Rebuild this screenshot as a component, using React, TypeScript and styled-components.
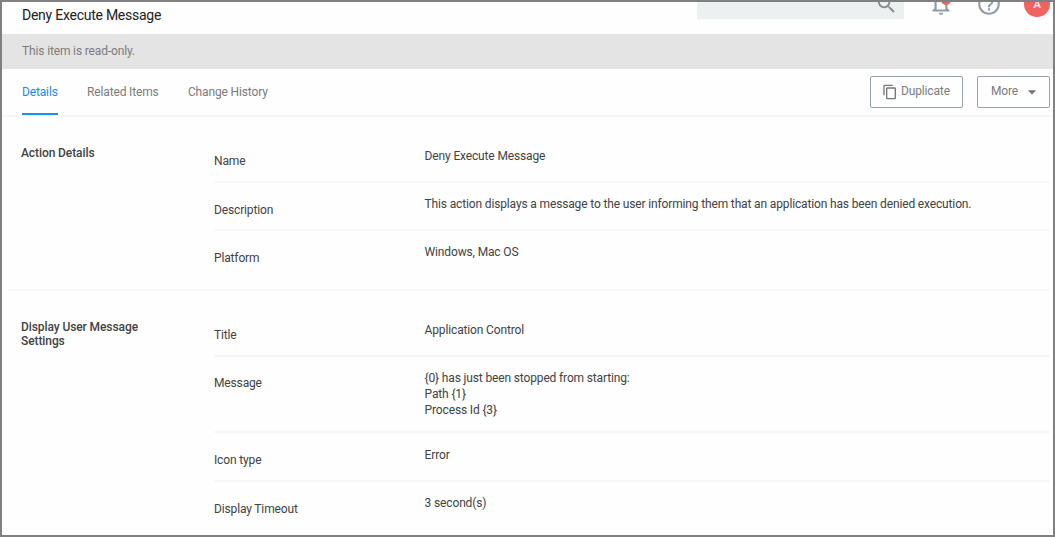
import React from "react";
import styled, { createGlobalStyle } from "styled-components";
import { MdSearch, MdNotificationsNone, MdHelpOutline, MdContentCopy, MdArrowDropDown } from "react-icons/md";

const GlobalStyle = createGlobalStyle`
  * { box-sizing: border-box; }
  body { margin: 0; background: #fff; font-family: Roboto, "Liberation Sans", sans-serif; font-size: 12px; letter-spacing: -0.145px; color: #424242; }
`;

const Frame = styled.div`
  width: 1055px;
  height: 537px;
  border: 2px solid #808080;
  background: #fefefe;
  overflow: hidden;
`;

const Header = styled.header`
  display: flex;
  justify-content: space-between;
  height: 32px;
  padding: 0 3px 0 20px;
  overflow: hidden;
`;

const Title = styled.h1`
  margin: 5px 0 0;
  font-size: 14px;
  line-height: 16px;
  font-weight: 400;
  letter-spacing: -0.25px;
  color: #212121;
`;

const Tools = styled.div`
  display: flex;
  align-items: flex-start;
  height: 28px;
  margin-top: -11px;
  color: #929ca8;
`;

const SearchBox = styled.div`
  display: flex;
  justify-content: flex-end;
  width: 207px;
  height: 28px;
  margin-right: 24px;
  padding: 2px 6px 0 0;
  background: #ecf0f1;
  color: #838c95;
`;

const BellButton = styled.div`
  position: relative;
  display: flex;
  margin-right: 21.5px;
`;

const Badge = styled.span`
  position: absolute;
  top: 4px;
  left: 13px;
  width: 10px;
  height: 10px;
  border-radius: 50%;
  background: #f25f5c;
`;

const HelpButton = styled.div`
  display: flex;
  margin-right: 22.5px;
`;

const Avatar = styled.div`
  width: 26px;
  height: 26px;
  border-radius: 50%;
  background: #f2625f;
  color: #fff;
  font-size: 11px;
  font-weight: 500;
  line-height: 27px;
  text-align: center;
`;

const Notice = styled.div`
  height: 35px;
  padding-left: 20px;
  line-height: 35px;
  background: #e4e4e4;
  color: #7b7b7b;
`;

const TabBar = styled.nav`
  display: flex;
  justify-content: space-between;
  height: 48px;
  padding: 0 3px 0 20px;
  border-bottom: 2px solid #f6f6f6;
`;

const Tabs = styled.div`
  display: flex;
  gap: 29.3px;
`;

const Tab = styled.div<{ $active?: boolean }>`
  height: 46px;
  line-height: 47px;
  color: ${(p) => (p.$active ? "#1e88f0" : "#7b7b7b")};
  border-bottom: 2px solid ${(p) => (p.$active ? "#1493f2" : "transparent")};
`;

const Actions = styled.div`
  display: flex;
  gap: 14px;
  padding-top: 7px;
`;

const Button = styled.button<{ $width: number }>`
  display: flex;
  align-items: center;
  width: ${(p) => p.$width}px;
  height: 32px;
  padding: 0 0 2px 13px;
  border: 1px solid #98a1ac;
  border-radius: 2px;
  background: #fefefe;
  font: inherit;
  letter-spacing: inherit;
  color: #7b7b7b;
`;

const CopyIcon = styled(MdContentCopy)`
  margin: 2px 3px 0 -2px;
  color: #757575;
`;

const CaretIcon = styled(MdArrowDropDown)`
  margin: 2px 0 0 4px;
  color: #757575;
`;

const Section = styled.section<{ $top: number }>`
  display: flex;
  margin: 0 3px 0 6px;
  padding: ${(p) => p.$top}px 0 0 13px;
  & + & { border-top: 2px solid #f7f7f7; }
`;

const SectionTitle = styled.h2`
  width: 193px;
  margin: 0;
  padding: 13px 50px 0 0;
  font-size: 12px;
  line-height: 14px;
  font-weight: 500;
  letter-spacing: -0.09px;
`;

const Fields = styled.div`
  flex: 1;
`;

const Field = styled.div<{ $height: number }>`
  display: flex;
  height: ${(p) => p.$height}px;
  border-bottom: 2px solid #f7f7f7;
  line-height: 16px;
  &:last-child { border-bottom: 0; }
`;

const Label = styled.div<{ $top: number }>`
  width: 210.6px;
  padding-top: ${(p) => p.$top}px;
`;

const Value = styled.div<{ $top: number }>`
  padding-top: ${(p) => p.$top}px;
  white-space: pre-line;
`;

type FieldData = { label: string; value: string; height: number; labelTop: number; valueTop: number };

const actionFields: FieldData[] = [
  { label: "Name", value: "Deny Execute Message", height: 50, labelTop: 20, valueTop: 15 },
  { label: "Description", value: "This action displays a message to the user informing them that an application has been denied execution.", height: 48, labelTop: 19, valueTop: 13 },
  { label: "Platform", value: "Windows, Mac OS", height: 58, labelTop: 19, valueTop: 13 },
];

const messageFields: FieldData[] = [
  { label: "Title", value: "Application Control", height: 50, labelTop: 20, valueTop: 15 },
  { label: "Message", value: "{0} has just been stopped from starting:\nPath {1}\nProcess Id {3}", height: 76, labelTop: 18, valueTop: 13 },
  { label: "Icon type", value: "Error", height: 49, labelTop: 19, valueTop: 14 },
  { label: "Display Timeout", value: "3 second(s)", height: 50, labelTop: 19, valueTop: 13 },
];

const FieldList = ({ items }: { items: FieldData[] }) => (
  <Fields>
    {items.map((f) => (
      <Field key={f.label} $height={f.height}>
        <Label $top={f.labelTop}>{f.label}</Label>
        <Value $top={f.valueTop}>{f.value}</Value>
      </Field>
    ))}
  </Fields>
);

export default function App() {
  return (
    <>
      <GlobalStyle />
      <Frame>
        <Header>
          <Title>Deny Execute Message</Title>
          <Tools>
            <SearchBox><MdSearch size={23} /></SearchBox>
            <BellButton><MdNotificationsNone size={26} /><Badge /></BellButton>
            <HelpButton><MdHelpOutline size={26} /></HelpButton>
            <Avatar>A</Avatar>
          </Tools>
        </Header>
        <Notice>This item is read-only.</Notice>
        <TabBar>
          <Tabs>
            <Tab $active>Details</Tab>
            <Tab>Related Items</Tab>
            <Tab>Change History</Tab>
          </Tabs>
          <Actions>
            <Button $width={93}><CopyIcon size={16} />Duplicate</Button>
            <Button $width={73}><span>More</span><CaretIcon size={20} /></Button>
          </Actions>
        </TabBar>
        <Section $top={16}>
          <SectionTitle>Action Details</SectionTitle>
          <FieldList items={actionFields} />
        </Section>
        <Section $top={16}>
          <SectionTitle>Display User Message Settings</SectionTitle>
          <FieldList items={messageFields} />
        </Section>
      </Frame>
    </>
  );
}
